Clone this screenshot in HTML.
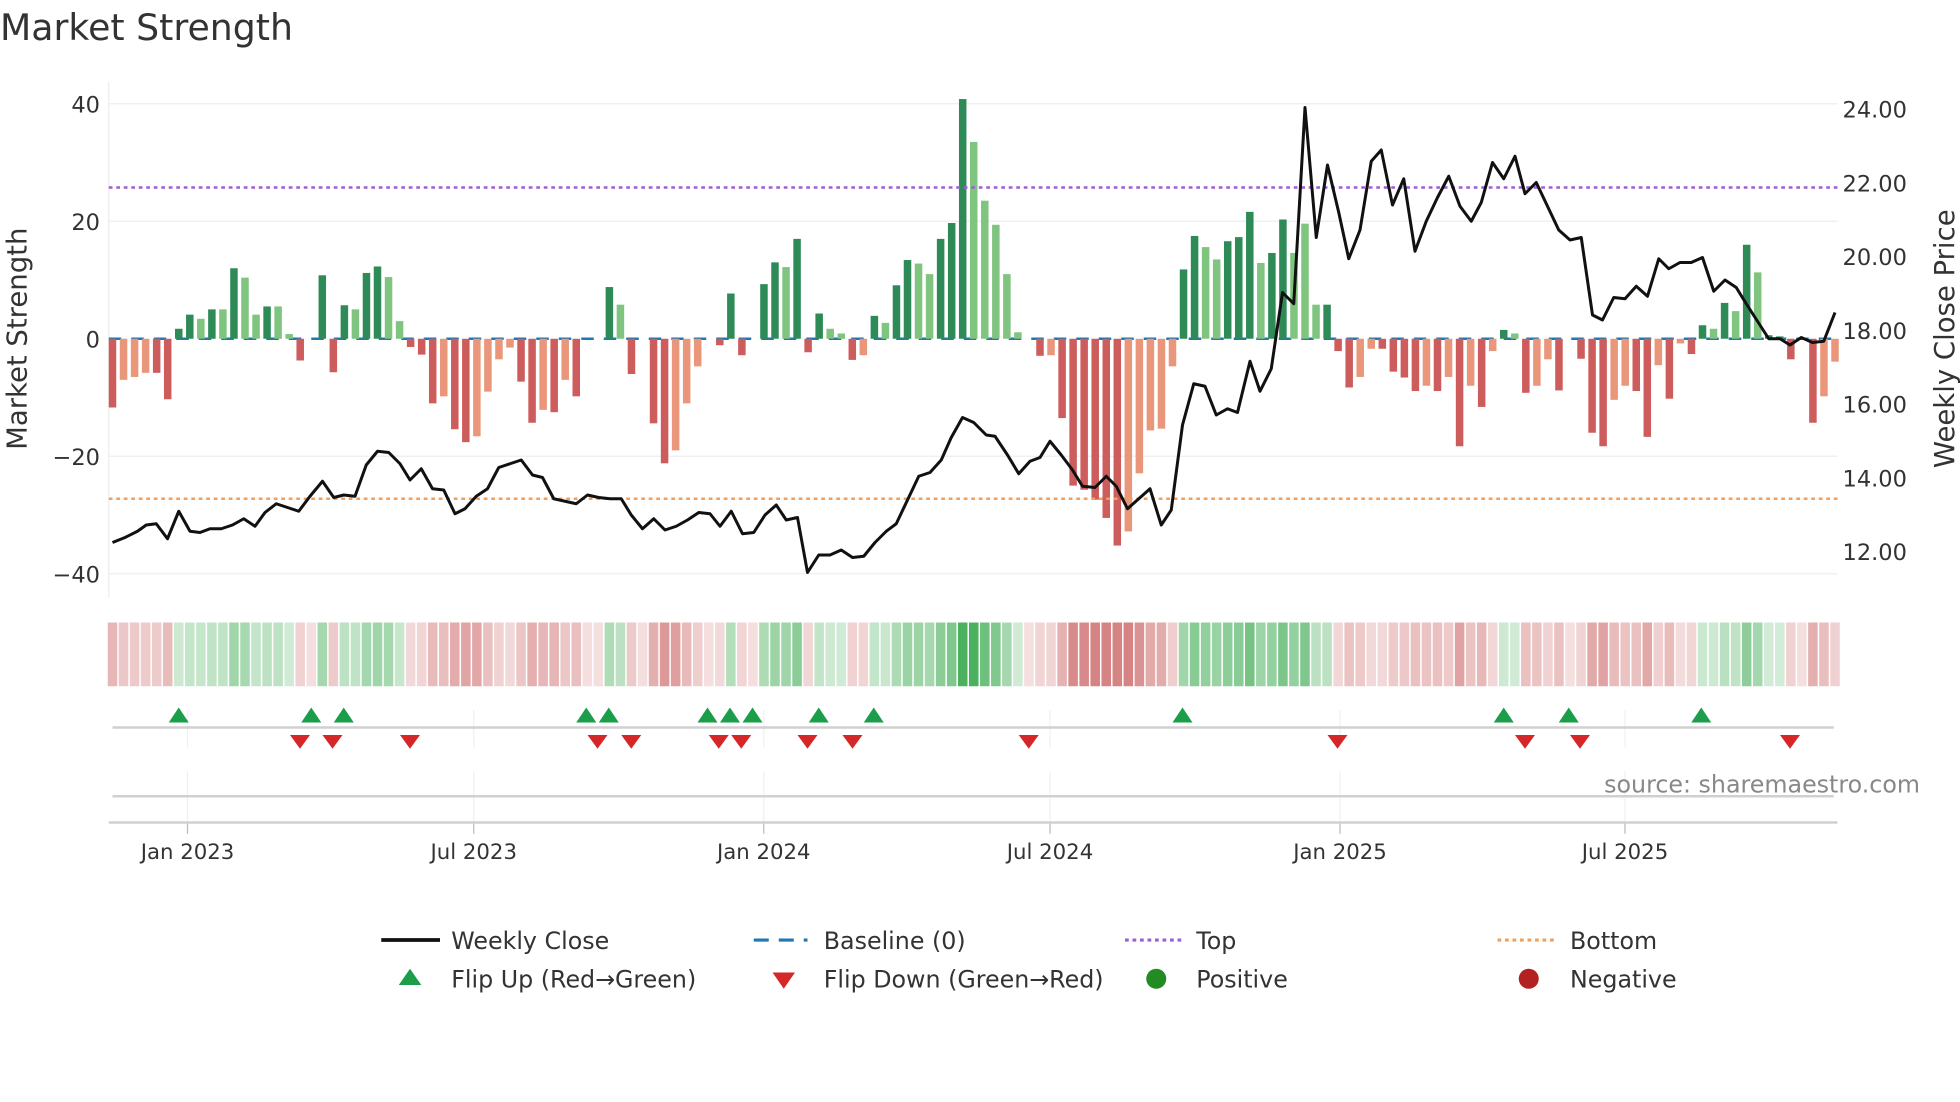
<!DOCTYPE html>
<html><head><meta charset="utf-8"><style>
html,body{margin:0;padding:0;background:#fff;}
svg{display:block;font-family:"DejaVu Sans","Liberation Sans",sans-serif;}
</style></head><body>
<svg id="s" xmlns="http://www.w3.org/2000/svg" width="1960" height="1102" viewBox="0 0 1568 881.6">
<rect width="1568" height="882" fill="#fff"/>
<text x="0" y="32" font-size="29" fill="#333">Market Strength</text>
<g stroke="#eef0f3" stroke-width="1.2">
<line x1="87" y1="83" x2="1470" y2="83"/><line x1="87" y1="177" x2="1470" y2="177"/>
<line x1="87" y1="365" x2="1470" y2="365"/><line x1="87" y1="459" x2="1470" y2="459"/>
</g>
<line x1="87" y1="65" x2="87" y2="478" stroke="#eee" stroke-width="1"/>
<g font-size="18" fill="#333" text-anchor="end">
<text x="80" y="90">40</text><text x="80" y="184">20</text><text x="80" y="278">0</text>
<text x="80" y="372">−20</text><text x="80" y="466">−40</text>
</g>
<g font-size="18" fill="#333">
<text x="1474" y="94">24.00</text><text x="1474" y="153">22.00</text><text x="1474" y="212">20.00</text>
<text x="1474" y="271">18.00</text><text x="1474" y="330">16.00</text><text x="1474" y="389">14.00</text>
<text x="1474" y="448">12.00</text>
</g>
<text transform="translate(21,271) rotate(-90)" text-anchor="middle" font-size="22" fill="#333">Market Strength</text>
<text transform="translate(1563,271) rotate(-90)" text-anchor="middle" font-size="22" fill="#333">Weekly Close Price</text>
<line x1="87" y1="271" x2="1470" y2="271" stroke="#1f77b4" stroke-width="2" stroke-dasharray="10,8"/>
<g id="bars"></g>
<line x1="87" y1="150" x2="1470" y2="150" stroke="#9b5fd6" stroke-width="2" stroke-dasharray="3,3"/>
<line x1="87" y1="399" x2="1470" y2="399" stroke="#f0a05a" stroke-width="2" stroke-dasharray="3,3"/>
<polyline id="line" fill="none" stroke="#111" stroke-width="2.4" stroke-linejoin="round"/>
<g id="heat"></g>
<g stroke="#eef0f3" stroke-width="1" id="vg"></g>
<line x1="90" y1="582" x2="1467" y2="582" stroke="#d0d0d0" stroke-width="2"/>
<line x1="90" y1="637" x2="1467" y2="637" stroke="#d0d0d0" stroke-width="2"/>
<line x1="87" y1="658" x2="1470" y2="658" stroke="#d0d0d0" stroke-width="2"/>
<g id="tri"></g>
<g font-size="17" fill="#333" text-anchor="middle">
<text x="150" y="687">Jan 2023</text><text x="379" y="687">Jul 2023</text><text x="611" y="687">Jan 2024</text>
<text x="840" y="687">Jul 2024</text><text x="1072" y="687">Jan 2025</text><text x="1300" y="687">Jul 2025</text>
</g>
<text x="1536" y="634" font-size="19" fill="#888" text-anchor="end">source: sharemaestro.com</text>
<g font-size="19" fill="#333">
<line x1="305" y1="752" x2="352" y2="752" stroke="#111" stroke-width="3"/>
<text x="361" y="759">Weekly Close</text>
<line x1="603" y1="752" x2="646" y2="752" stroke="#1f77b4" stroke-width="2.5" stroke-dasharray="12,8"/>
<text x="659" y="759">Baseline (0)</text>
<line x1="900" y1="752" x2="945" y2="752" stroke="#9b5fd6" stroke-width="2.5" stroke-dasharray="3,3"/>
<text x="957" y="759">Top</text>
<line x1="1198" y1="752" x2="1243" y2="752" stroke="#f0a05a" stroke-width="2.5" stroke-dasharray="3,3"/>
<text x="1256" y="759">Bottom</text>
<polygon points="319,788 337,788 328,775" fill="#1a9e4a"/>
<text x="361" y="790">Flip Up (Red→Green)</text>
<polygon points="618,778 636,778 627,791" fill="#d62728"/>
<text x="659" y="790">Flip Down (Green→Red)</text>
<circle cx="925" cy="783" r="8" fill="#228b22"/>
<text x="957" y="790">Positive</text>
<circle cx="1223" cy="783" r="8" fill="#b22222"/>
<text x="1256" y="790">Negative</text>
</g>
</svg>
<script>
var NS="http://www.w3.org/2000/svg";
function el(t,a,p){var e=document.createElementNS(NS,t);for(var k in a)e.setAttribute(k,a[k]);p.appendChild(e);return e;}
var v=[[-11.7,1],[-7,0],[-6.5,0],[-5.8,0],[-5.8,1],[-10.3,1],[1.7,1],[4.1,1],[3.4,0],[5,1],[5,0],[12,1],[10.4,0],[4.1,0],[5.5,1],[5.5,0],[0.8,0],[-3.7,1],[0,1],[10.8,1],[-5.7,1],[5.7,1],[5,0],[11.2,1],[12.3,1],[10.5,0],[3,0],[-1.4,1],[-2.7,1],[-11,1],[-9.8,0],[-15.4,1],[-17.6,1],[-16.6,0],[-9,0],[-3.5,0],[-1.5,0],[-7.3,1],[-14.3,1],[-12.1,0],[-12.5,1],[-7,0],[-9.8,1],[0,1],[0,1],[8.8,1],[5.8,0],[-6,1],[0,1],[-14.4,1],[-21.2,1],[-19,0],[-11,0],[-4.7,0],[0,1],[-1.1,1],[7.7,1],[-2.8,1],[0,1],[9.3,1],[13,1],[12.2,0],[17,1],[-2.3,1],[4.3,1],[1.7,0],[0.9,0],[-3.6,1],[-2.8,0],[3.9,1],[2.7,0],[9.1,1],[13.4,1],[12.8,0],[11,0],[17,1],[19.7,1],[40.8,1],[33.5,0],
[23.5,0],[19.4,0],[11,0],[1.1,0],[0,1],[-2.9,1],[-2.8,0],[-13.5,1],[-25,1],[-25.7,1],[-27.4,1],[-30.5,1],[-35.2,1],[-32.8,0],[-22.9,0],[-15.6,0],[-15.3,0],[-4.7,0],[11.8,1],[17.5,1],[15.6,0],[13.5,0],[16.6,1],[17.3,1],[21.6,1],[12.9,0],[14.6,1],[20.3,1],[14.6,0],[19.6,0],[5.8,0],[5.8,1],[-2.1,1],[-8.3,1],[-6.5,0],[-1.7,0],[-1.7,1],[-5.6,1],[-6.6,1],[-8.9,1],[-8,0],[-8.9,1],[-6.5,0],[-18.3,1],[-8,0],[-11.6,1],[-2.1,0],[1.5,1],[0.9,0],[-9.2,1],[-8,0],[-3.5,0],[-8.8,1],[0,1],[-3.4,1],[-16,1],[-18.3,1],[-10.4,0],[-8,0],[-8.9,1],[-16.7,1],[-4.5,0],[-10.2,1],[-0.8,0],[-2.6,1],[2.3,1],[1.7,0],[6.1,1],[4.7,0],[16,1],[11.3,0],[0.6,1],[0.4,1],[-3.5,1],[0,1],[-14.3,1],[-9.8,0],[-3.9,0]];
var n=v.length,x0=90,x1=1468,step=(x1-x0)/(n-1);
var bars=document.getElementById('bars'),heat=document.getElementById('heat');
for(var i=0;i<n;i++){var x=x0+i*step,val=v[i][0],d=v[i][1];
 if(val!==0){var h=Math.abs(val)*4.7;var c=val>0?(d?'#2e8b57':'#7fc47f'):(d?'#cd5c5c':'#e9967a');
  el('rect',{x:x-3,y:val>0?271-h:271,width:6,height:h,fill:c},bars);}
 var col;
 if(val>0){col='rgba(60,170,80,'+(0.22+Math.min(0.7,val/45))+')';}
 else{col='rgba(200,90,90,'+(0.2+Math.min(0.55,Math.abs(val)/50))+')';}
 el('rect',{x:x-step/2+0.6,y:498,width:step-1.2,height:51,fill:col},heat);
}
var P=[[90,434],[100,430],[110,425],[117,420],[125,419],[134,431],[143,409],[152,425],[160,426],[168,423],[177,423],[186,420],[195,415],[204,421],[212,410],[221,403],[230,406],[239,409],[248,397],[258,385],[267,398],[275,396],[284,397],[293,372],[302,361],[311,362],[320,371],[328,384],[337,375],[346,391],[355,392],[364,411],[372,407],[381,397],[390,391],[399,374],[408,371],[417,368],[426,380],[434,382],[443,399],[452,401],[461,403],[470,396],[479,398],[488,399],[497,399],[505,412],[514,423],[523,415],[532,424],[541,421],[550,416],[559,410],[568,411],[576,421],[585,409],[594,427],[603,426],[612,412],[621,404],[629,416],[638,414],[646,458],[655,444],[664,444],[673,440],[682,446],[691,445],[700,434],[709,425],[717,419],[726,400],[735,381],[744,378],[753,368],[761,350],[770,334],[779,338],[789,348],[796,349],[806,364],[815,379],[824,369],[832,366],[840,353],[849,364],[858,376],[866,389],[876,390],[885,381],[893,389],[902,407],[911,399],[920,391],[929,420],[937,408],[946,340],[955,307],[964,309],[973,332],[982,327],[990,330],[1000,289],[1008,313],[1017,295],[1026,234],[1035,243],[1044,86],[1053,190],[1062,132],[1071,170],[1079,207],[1088,184],[1097,129],[1105,120],[1114,164],[1123,143],[1132,201],[1141,177],[1150,158],[1159,141],[1168,165],[1177,177],[1185,162],[1194,130],[1203,143],[1212,125],[1220,155],[1229,146],[1238,165],[1247,184],[1256,192],[1265,190],[1274,252],[1282,256],[1291,238],[1300,239],[1309,229],[1318,237],[1327,207],[1335,215],[1344,210],[1353,210],[1362,206],[1371,233],[1380,224],[1389,230],[1397,243],[1406,257],[1415,271],[1424,271],[1432,276],[1441,270],[1450,274],[1459,273],[1468,250]];
document.getElementById('line').setAttribute('points',P.map(function(p){return p.join(',')}).join(' '));
var vg=document.getElementById('vg');
[150,379,611,840,1072,1300].forEach(function(x){el('line',{x1:x,y1:568,x2:x,y2:598},vg);el('line',{x1:x,y1:617,x2:x,y2:658},vg);el('line',{x1:x,y1:658,x2:x,y2:667,stroke:'#bbb'},vg);});
var tri=document.getElementById('tri');
[143,249,275,469,487,566,584,602,655,699,946,1203,1255,1361].forEach(function(x){el('polygon',{points:(x-8)+',578 '+(x+8)+',578 '+x+',566',fill:'#1a9e4a'},tri);});
[240,266,328,478,505,575,593,646,682,823,1070,1220,1264,1432].forEach(function(x){el('polygon',{points:(x-8)+',588 '+(x+8)+',588 '+x+',599',fill:'#d62728'},tri);});
</script>
</body></html>
